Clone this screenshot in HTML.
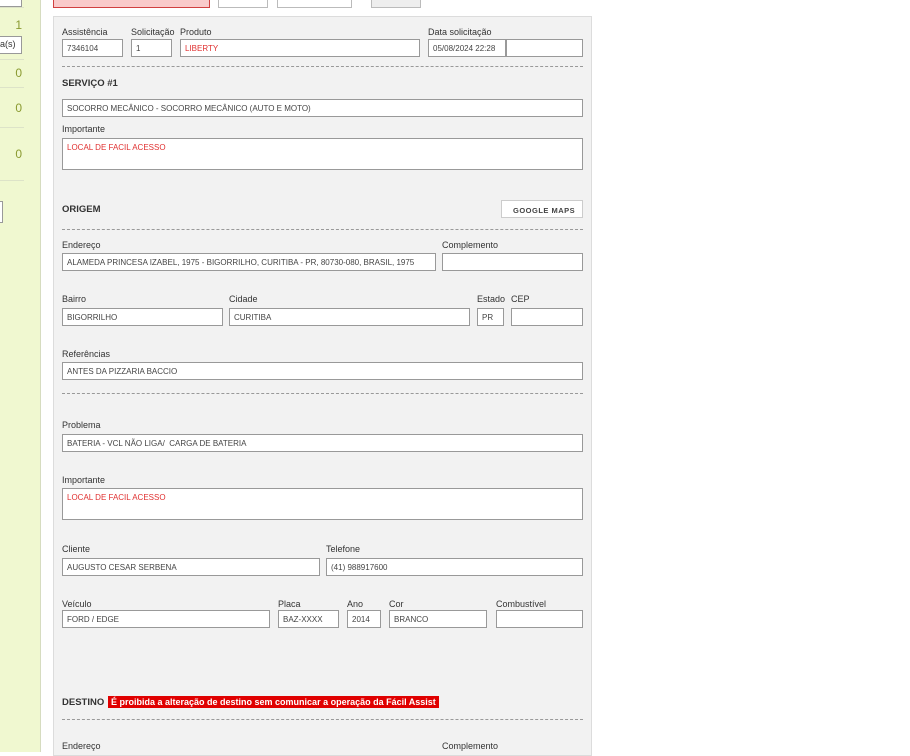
<!DOCTYPE html>
<html><head><meta charset="utf-8"><style>
*{box-sizing:border-box;margin:0;padding:0}
body{width:910px;height:752px;overflow:hidden;background:#fff;font-family:"Liberation Sans",sans-serif;position:relative}
.a{position:absolute}
.side{left:0;top:0;width:41px;height:752px;background:#f0f8d0;border-right:1px solid #d6dcc0}
.hl{position:absolute;left:0;width:24px;height:1px;background:#dde3c8}
.num{position:absolute;right:18px;color:#8a9a30;font-size:12px}
.panel{left:53px;top:16px;width:539px;height:740px;background:#f2f2f2;border:1px solid #dcdcdc}
.lb{position:absolute;font-size:9px;color:#333}
.in{position:absolute;background:#fff;border:1px solid #999;height:18px;font-size:8px;color:#444;padding:4px 0 0 4px;white-space:nowrap;overflow:hidden}
.red{color:#e03030}
.ta{height:32px}
.h{position:absolute;font-size:9.5px;font-weight:bold;color:#333}
.dash{position:absolute;left:62px;width:521px;border-top:1px dashed #999}
.btn{position:absolute;background:#fff;border:1px solid #bbb;height:9px;top:-1px}
</style></head><body>
<div class="a side">
<div class="in" style="left:-5px;top:-10px;width:27px;height:17px"></div>
<div class="hl" style="top:7px"></div>
<div class="num" style="top:18px">1</div>
<div class="in" style="left:-5px;top:36px;width:27px;font-size:9px;color:#333;padding:2px 0 0 4px">a(s)</div>
<div class="hl" style="top:59px"></div>
<div class="num" style="top:66px">0</div>
<div class="hl" style="top:87px"></div>
<div class="num" style="top:101px">0</div>
<div class="hl" style="top:127px"></div>
<div class="num" style="top:147px">0</div>
<div class="hl" style="top:180px"></div>
<div class="in" style="left:-5px;top:201px;width:8px;height:22px"></div>
</div>
<div class="btn" style="left:53px;width:157px;background:#f9caca;border-color:#d04040"></div>
<div class="btn" style="left:218px;width:50px"></div>
<div class="btn" style="left:277px;width:75px"></div>
<div class="btn" style="left:371px;width:50px;background:#eee"></div>
<div class="a panel"></div>

<div class="lb" style="left:62px;top:27px">Assistência</div>
<div class="lb" style="left:131px;top:27px">Solicitação</div>
<div class="lb" style="left:180px;top:27px">Produto</div>
<div class="lb" style="left:428px;top:27px">Data solicitação</div>
<div class="in" style="left:62px;top:39px;width:61px">7346104</div>
<div class="in" style="left:131px;top:39px;width:41px">1</div>
<div class="in red" style="left:180px;top:39px;width:240px">LIBERTY</div>
<div class="in" style="left:428px;top:39px;width:78px">05/08/2024 22:28</div>
<div class="in" style="left:506px;top:39px;width:77px"></div>
<div class="dash" style="top:66px"></div>
<div class="h" style="left:62px;top:78px">SERVIÇO #1</div>
<div class="in" style="left:62px;top:99px;width:521px">SOCORRO MECÂNICO - SOCORRO MECÂNICO (AUTO E MOTO)</div>
<div class="lb" style="left:62px;top:124px">Importante</div>
<div class="in ta red" style="left:62px;top:138px;width:521px">LOCAL DE FACIL ACESSO</div>
<div class="h" style="left:62px;top:204px">ORIGEM</div>
<div class="in" style="left:501px;top:200px;width:82px;font-weight:bold;font-size:7.5px;letter-spacing:.5px;padding:5px 0 0 11px;color:#444;border-color:#ccc">GOOGLE MAPS</div>
<div class="dash" style="top:229px"></div>
<div class="lb" style="left:62px;top:240px">Endereço</div>
<div class="lb" style="left:442px;top:240px">Complemento</div>
<div class="in" style="left:62px;top:253px;width:374px">ALAMEDA PRINCESA IZABEL, 1975 - BIGORRILHO, CURITIBA - PR, 80730-080, BRASIL, 1975</div>
<div class="in" style="left:442px;top:253px;width:141px"></div>
<div class="lb" style="left:62px;top:294px">Bairro</div>
<div class="lb" style="left:229px;top:294px">Cidade</div>
<div class="lb" style="left:477px;top:294px">Estado</div>
<div class="lb" style="left:511px;top:294px">CEP</div>
<div class="in" style="left:62px;top:308px;width:161px">BIGORRILHO</div>
<div class="in" style="left:229px;top:308px;width:241px">CURITIBA</div>
<div class="in" style="left:477px;top:308px;width:27px">PR</div>
<div class="in" style="left:511px;top:308px;width:72px"></div>
<div class="lb" style="left:62px;top:349px">Referências</div>
<div class="in" style="left:62px;top:362px;width:521px">ANTES DA PIZZARIA BACCIO</div>
<div class="dash" style="top:393px"></div>
<div class="lb" style="left:62px;top:420px">Problema</div>
<div class="in" style="left:62px;top:434px;width:521px">BATERIA - VCL NÃO LIGA/&nbsp; CARGA DE BATERIA</div>
<div class="lb" style="left:62px;top:475px">Importante</div>
<div class="in ta red" style="left:62px;top:488px;width:521px">LOCAL DE FACIL ACESSO</div>
<div class="lb" style="left:62px;top:544px">Cliente</div>
<div class="lb" style="left:326px;top:544px">Telefone</div>
<div class="in" style="left:62px;top:558px;width:258px">AUGUSTO CESAR SERBENA</div>
<div class="in" style="left:326px;top:558px;width:257px">(41) 988917600</div>
<div class="lb" style="left:62px;top:599px">Veículo</div>
<div class="lb" style="left:278px;top:599px">Placa</div>
<div class="lb" style="left:347px;top:599px">Ano</div>
<div class="lb" style="left:389px;top:599px">Cor</div>
<div class="lb" style="left:496px;top:599px">Combustível</div>
<div class="in" style="left:62px;top:610px;width:208px">FORD / EDGE</div>
<div class="in" style="left:278px;top:610px;width:61px">BAZ-XXXX</div>
<div class="in" style="left:347px;top:610px;width:34px">2014</div>
<div class="in" style="left:389px;top:610px;width:98px">BRANCO</div>
<div class="in" style="left:496px;top:610px;width:87px"></div>
<div class="h" style="left:62px;top:697px">DESTINO</div>
<div class="a" style="left:108px;top:696px;background:#e00000;color:#fff;font-size:9px;font-weight:bold;padding:1px 3px;white-space:nowrap">É proibida a alteração de destino sem comunicar a operação da Fácil Assist</div>
<div class="dash" style="top:719px"></div>
<div class="lb" style="left:62px;top:741px">Endereço</div>
<div class="lb" style="left:442px;top:741px">Complemento</div>
</body></html>
